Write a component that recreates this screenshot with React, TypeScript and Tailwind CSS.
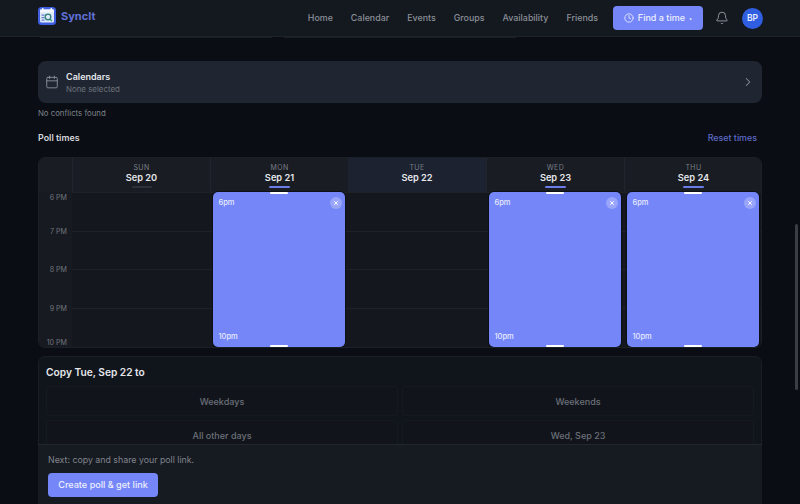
import { Bell, Calendar, ChevronRight, Clock, X } from "lucide-react";

const NAV = ["Home", "Calendar", "Events", "Groups", "Availability", "Friends"];

function Logo() {
  return (
    <svg width="18" height="18" viewBox="0 0 18 18" fill="none">
      <rect x="0" y="0" width="18" height="18" rx="3.5" fill="#3f5fe0" />
      <rect x="2" y="2.5" width="14" height="13" rx="1.5" fill="#dfe8f8" />
      <rect x="2" y="2.5" width="14" height="3" fill="#f2f6fd" />
      <rect x="4" y="1" width="1.5" height="3" fill="#f2f6fd" />
      <rect x="12.5" y="1" width="1.5" height="3" fill="#f2f6fd" />
      <circle cx="10" cy="10" r="2.8" stroke="#2e7f78" strokeWidth="1.3" />
      <path d="M12 12.2l2 1.8" stroke="#2e9a7c" strokeWidth="1.3" />
      <rect x="3.5" y="7.5" width="3" height="1.2" fill="#5c7cc4" />
      <rect x="3.5" y="10" width="3" height="1.2" fill="#5c7cc4" />
      <rect x="3.5" y="12.5" width="3" height="1.2" fill="#5c7cc4" />
    </svg>
  );
}

function DayHeader({ dow, date, selected, bar }: { dow: string; date: string; selected?: boolean; bar: "on" | "off" | "none" }) {
  return (
    <div className={`relative flex h-[34px] flex-col items-center pt-[5px] ${selected ? "bg-[#1c2230]" : "border-l border-[#20242c]"}`}>
      <span className="text-[7px] leading-[9px] tracking-[0.06em] text-[#787d86]">{dow}</span>
      <span className="text-[9.25px] leading-[11px] font-semibold text-[#e5e7eb]">{date}</span>
      {bar === "on" && <span className="mt-[2.5px] h-[2px] w-[21px] rounded-full bg-[#6b7be8]" />}
      {bar === "off" && <span className="mt-[2.5px] h-[2px] w-[20px] rounded-full bg-[#2d323a]" />}
    </div>
  );
}

function DayCol({ block }: { block?: boolean }) {
  return (
    <div className="relative flex h-[155px] flex-col">
      {[0, 1, 2, 3].map((i) => (
        <div key={i} className="h-[38.5px] border-t border-[#1d2128]" />
      ))}
      {block && (
        <div className="absolute inset-x-[3px] top-0 bottom-[0.5px] rounded-[5px] bg-[#7486f8] shadow-[0_0_0_1px_#0c0f14]">
          <span className="absolute top-0 left-1/2 h-[2px] w-[18px] -translate-x-1/2 rounded-full bg-white" />
          <span className="absolute top-[6px] left-[5.5px] text-[7.5px] leading-[10px] font-medium text-[#e8ebff]">6pm</span>
          <span className="absolute top-[4.5px] right-[3px] flex h-[12px] w-[12px] items-center justify-center rounded-full bg-[#98a5fb] text-white">
            <X size={6} strokeWidth={4} />
          </span>
          <span className="absolute bottom-[5px] left-[5.5px] text-[7.5px] leading-[10px] font-medium text-[#e8ebff]">10pm</span>
          <span className="absolute bottom-0 left-1/2 h-[2px] w-[18px] -translate-x-1/2 rounded-full bg-white" />
        </div>
      )}
    </div>
  );
}

export default function App() {
  return (
    <div
      className="relative flex h-[504px] w-[800px] flex-col overflow-hidden bg-[#0a0d13]"
      style={{ fontFamily: "Inter, 'Liberation Sans', sans-serif" }}
    >
      <header className="flex h-[37px] shrink-0 items-center justify-between border-b border-[#1e2229] bg-[#14181f] pr-[37px] pl-[38px]">
        <div className="flex items-center gap-[5px] pb-[4px]">
          <Logo />
          <span className="text-[11px] font-bold text-[#6170d6]">SyncIt</span>
        </div>
        <nav className="flex items-center">
          <div className="flex items-center gap-[18px]">
            {NAV.map((n) => (
              <span key={n} className="text-[8.9px] leading-[12px] font-medium text-[#8b9098]">{n}</span>
            ))}
          </div>
          <button className="ml-[15px] flex h-[24px] w-[90px] items-center justify-center gap-[4px] rounded-[4px] bg-[#7486f8] text-[9px] font-medium text-[#eef0ff]">
            <Clock size={10} strokeWidth={2} />
            <span>Find a time</span>
            <span className="text-[6px]">•</span>
          </button>
          <Bell size={14} strokeWidth={1.5} className="ml-[12px] text-[#a0a4ab]" />
          <span className="ml-[13px] flex h-[21px] w-[21px] items-center justify-center rounded-full bg-[#2f5fe0] text-[8.5px] font-semibold text-[#e8eeff]">BP</span>
        </nav>
      </header>

      <main className="flex flex-1 flex-col px-[38px]">
        <div className="flex h-[1px] gap-[12px] pl-[2px]">
          <div className="h-[1px] w-[232px] bg-[#1a1e25]" />
          <div className="h-[1px] w-[232px] bg-[#1a1e25]" />
        </div>
        <div className="mt-[23px] flex h-[42px] items-center rounded-[8px] bg-[#202631] pr-[7px] pl-[7px]">
          <Calendar size={14} strokeWidth={1.5} className="text-[#9096a0]" />
          <div className="ml-[7px] flex flex-col pt-[2px]">
            <span className="text-[9px] leading-[12px] font-semibold text-[#e2e5ea]">Calendars</span>
            <span className="text-[7.9px] leading-[12px] text-[#6d737d]">None selected</span>
          </div>
          <ChevronRight size={14} strokeWidth={1.75} className="ml-auto text-[#8b9098]" />
        </div>
        <p className="mt-[5px] text-[7.8px] leading-[11px] text-[#7d828a]">No conflicts found</p>

        <div className="mt-[13px] flex items-center justify-between pr-[5px]">
          <span className="text-[8.9px] leading-[12px] font-semibold text-[#d5d8dd]">Poll times</span>
          <span className="text-[8.9px] leading-[12px] font-medium text-[#5e6bc8]">Reset times</span>
        </div>

        <div className="mt-[13px] h-[191px] overflow-hidden rounded-[7px] border border-[#1b1f26] bg-[#14171d]">
          <div className="grid grid-cols-[33px_repeat(5,138px)] bg-[#191c22]">
            <div />
            <DayHeader dow="SUN" date="Sep 20" bar="off" />
            <DayHeader dow="MON" date="Sep 21" bar="on" />
            <DayHeader dow="TUE" date="Sep 22" bar="none" selected />
            <DayHeader dow="WED" date="Sep 23" bar="on" />
            <DayHeader dow="THU" date="Sep 24" bar="on" />
          </div>
          <div className="grid grid-cols-[33px_repeat(5,138px)]">
            <div className="flex h-[155px] flex-col bg-[#171a20] pt-[1px] pr-[5px] text-right text-[7.1px] leading-[10px] text-[#6f747d]">
              <span>6 PM</span>
              <span className="mt-[24px]">7 PM</span>
              <span className="mt-[28px]">8 PM</span>
              <span className="mt-[29px]">9 PM</span>
              <span className="mt-[24px]">10 PM</span>
            </div>
            <DayCol />
            <DayCol block />
            <DayCol />
            <DayCol block />
            <DayCol block />
          </div>
        </div>

        <section className="mt-[8px] flex-1 rounded-t-[7px] border border-[#1a1e25] bg-[#10141b] px-[7px] pt-[8px]">
          <h2 className="text-[10.2px] leading-[14px] font-semibold text-[#e5e7eb]">Copy Tue, Sep 22 to</h2>
          <div className="mt-[7px] grid grid-cols-2 gap-[4px]">
            {["Weekdays", "Weekends", "All other days", "Wed, Sep 23"].map((t) => (
              <div key={t} className="flex h-[30px] items-center justify-center rounded-[3px] border border-[#161a20] bg-[#11151b] pt-[1px] text-[9px] font-medium text-[#6c7079]">
                {t}
              </div>
            ))}
          </div>
        </section>
      </main>

      <div className="absolute right-[38px] bottom-0 left-[38px] h-[60px] border-t border-[#22262d] bg-[#161a21] px-[10px] pt-[9px]">
        <p className="text-[8.8px] leading-[12px] text-[#81858d]">Next: copy and share your poll link.</p>
        <button className="mt-[7px] h-[24px] w-[110px] rounded-[4px] bg-[#7486f8] text-[9.1px] font-medium text-[#eef0ff]">
          Create poll &amp; get link
        </button>
      </div>

      <div className="absolute top-[224px] right-[2px] h-[166px] w-[3px] rounded-full bg-[#3a3d42]" />
    </div>
  );
}
